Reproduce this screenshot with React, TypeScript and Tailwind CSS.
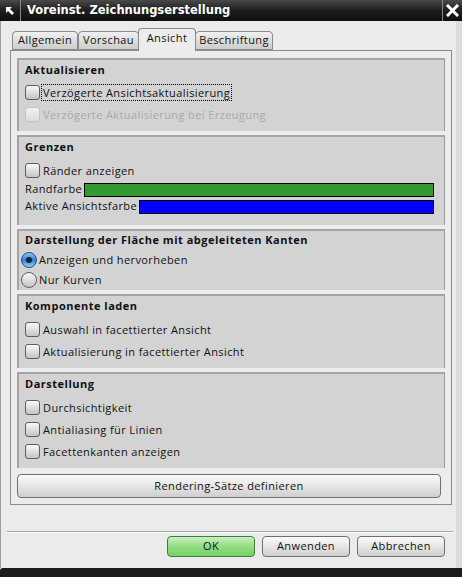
import React from 'react';

const Checkbox = ({ disabled = false }: { disabled?: boolean }) => (
  <span
    className={
      'inline-block h-[15px] w-[15px] shrink-0 rounded-[3px] border ' +
      (disabled
        ? 'border-[#c4c4c4] bg-gradient-to-b from-[#f2f2f2] to-[#dcdcdc]'
        : 'border-[#5e5e5e] bg-gradient-to-b from-[#fafafa] to-[#c4c4c4]')
    }
  />
);

const CheckRow = ({ label, disabled = false, focused = false }: { label: string; disabled?: boolean; focused?: boolean }) => (
  <div className="flex h-[22px] items-center">
    <Checkbox disabled={disabled} />
    <span
      className={
        'ml-[1px] px-[1px] leading-[15px] ' +
        (focused ? 'border border-dotted border-black' : 'border border-transparent') +
        (disabled ? ' text-[#a9a9a9]' : ' text-[#111]')
      }
    >
      {label}
    </span>
  </div>
);

const Radio = ({ checked = false }: { checked?: boolean }) =>
  checked ? (
    <span className="flex h-[16px] w-[16px] shrink-0 items-center justify-center rounded-full border border-[#1d4f8a] bg-gradient-to-b from-[#8fc3f0] via-[#2f7fd0] to-[#9ad0f8]">
      <span className="h-[6px] w-[6px] rounded-full bg-[#10243a]" />
    </span>
  ) : (
    <span className="h-[16px] w-[16px] shrink-0 rounded-full border border-[#5e5e5e] bg-gradient-to-b from-[#fafafa] to-[#c4c4c4]" />
  );

const Group = ({ title, className, children }: { title: string; className?: string; children: React.ReactNode }) => (
  <div className={'flex flex-col border-t-2 border-l-2 border-r border-[#a4a4a4] border-r-[#9c9c9c] bg-[#d3d3d3] pl-[6px] pt-[1px] ' + (className ?? '')}>
    <div className="flex h-[18px] items-center font-bold tracking-[0.5px] text-[#111]">{title}</div>
    {children}
  </div>
);

const Tab = ({ label, w, active = false }: { label: string; w: string; active?: boolean }) =>
  active ? (
    <div className={`relative z-10 -mx-[1px] -mb-[1px] flex h-[23px] items-center justify-center rounded-t-[4px] border border-b-0 border-[#8a8a8a] bg-[#ececec] pb-[3px] text-[#111] ${w}`}>
      {label}
    </div>
  ) : (
    <div className={`flex h-[19px] items-center justify-center rounded-t-[4px] border border-[#8a8a8a] bg-gradient-to-b from-[#f0f0f0] to-[#cdcdcd] text-[#111] ${w}`}>
      {label}
    </div>
  );

const Button = ({ label, primary = false, className }: { label: string; primary?: boolean; className?: string }) => (
  <button
    className={
      'flex h-[21px] items-center justify-center rounded-[4px] border text-[#111] ' +
      (primary
        ? 'border-[#3e7d3e] bg-gradient-to-b from-[#c8f0c0] via-[#92dc82] to-[#78d068] '
        : 'border-[#6f6f6f] bg-gradient-to-b from-[#fbfbfb] via-[#e6e6e6] to-[#cfcfcf] ') +
      (className ?? '')
    }
  >
    {label}
  </button>
);

export default function App() {
  return (
    <div className="flex h-[577px] w-[462px] flex-col bg-[#ebebeb] font-['Open_Sans',sans-serif] text-[11px] tracking-[0.4px]">
      {/* title bar */}
      <div className="flex h-[21px] shrink-0 items-stretch bg-gradient-to-b from-[#4a4a4a] via-[#1e1e1e] to-[#0e0e0e]">
        <div className="flex w-[21px] items-center justify-center border-r border-[#8a8a8a]">
          <svg width="12" height="12" viewBox="0 0 12 12">
            <path d="M2 2 L8 2 L6 4 L10 8 L8 10 L4 6 L2 8 Z" fill="#fff" />
          </svg>
        </div>
        <div className="flex flex-1 items-center pl-[6px] font-['DejaVu_Sans',sans-serif] text-[11.5px] font-bold tracking-normal text-white">
          Voreinst. Zeichnungserstellung
        </div>
        <div className="flex w-[20px] items-center justify-center border-l border-[#8a8a8a]">
          <svg width="13" height="13" viewBox="0 0 13 13">
            <path d="M2 2 L11 11 M11 2 L2 11" stroke="#fff" strokeWidth="3" strokeLinecap="square" />
          </svg>
        </div>
      </div>

      {/* body */}
      <div className="flex flex-1 flex-col border-l border-r-[6px] border-l-[#a0a0a0] border-r-[#dcdcdc] pl-[9px] pr-[4px] pt-[7px]">
        <div className="flex items-end pl-[2px]">
          <Tab label="Allgemein" w="w-[66px]" />
          <Tab label="Vorschau" w="w-[61px]" />
          <Tab label="Ansicht" w="w-[58px]" active />
          <Tab label="Beschriftung" w="w-[78px]" />
        </div>

        <div className="flex h-[455px] flex-col gap-[4px] border border-[#8a8a8a] bg-[#ececec] pl-[6px] pr-[6px] pt-[7px]">
          <Group title="Aktualisieren" className="h-[73px]">
            <div className="mt-[2px]">
              <CheckRow label="Verzögerte Ansichtsaktualisierung" focused />
              <CheckRow label="Verzögerte Aktualisierung bei Erzeugung" disabled />
            </div>
          </Group>

          <Group title="Grenzen" className="h-[90px]">
            <div className="mt-[3px] pr-[10px]">
              <CheckRow label="Ränder anzeigen" />
              <div className="flex h-[17px] items-center text-[#111]">
                <span>Randfarbe</span>
                <span className="ml-[2px] h-[14px] flex-1 border border-black bg-[#339933]" />
              </div>
              <div className="flex h-[17px] items-center text-[#111]">
                <span>Aktive Ansichtsfarbe</span>
                <span className="ml-[2px] h-[14px] flex-1 border border-black bg-[#0000ff]" />
              </div>
            </div>
          </Group>

          <Group title="Darstellung der Fläche mit abgeleiteten Kanten" className="h-[61px]">
            <div className="-ml-[4px] mt-[1px]">
              <div className="flex h-[20px] items-center gap-[2px] text-[#111]">
                <Radio checked />
                <span>Anzeigen und hervorheben</span>
              </div>
              <div className="flex h-[20px] items-center gap-[2px] text-[#111]">
                <Radio />
                <span>Nur Kurven</span>
              </div>
            </div>
          </Group>

          <Group title="Komponente laden" className="h-[74px]">
            <div className="mt-[3px]">
              <CheckRow label="Auswahl in facettierter Ansicht" />
              <CheckRow label="Aktualisierung in facettierter Ansicht" />
            </div>
          </Group>

          <Group title="Darstellung" className="h-[96px]">
            <div className="mt-[3px]">
              <CheckRow label="Durchsichtigkeit" />
              <CheckRow label="Antialiasing für Linien" />
              <CheckRow label="Facettenkanten anzeigen" />
            </div>
          </Group>

          <Button label="Rendering-Sätze definieren" className="mt-[2px] h-[24px] w-[424px]" />
        </div>

        <div className="mt-[26px] -ml-[3px] -mr-[1px] border-t border-b border-t-[#a8a8a8] border-b-[#fafafa]" />

        <div className="mt-[3px] flex justify-end gap-[7px] pr-[7px]">
          <Button label="OK" primary className="w-[88px]" />
          <Button label="Anwenden" className="w-[88px]" />
          <Button label="Abbrechen" className="w-[88px]" />
        </div>
      </div>

      <div className="h-[9px] shrink-0 rounded-tl-[3px] bg-[#1c1c1c]" />
    </div>
  );
}
